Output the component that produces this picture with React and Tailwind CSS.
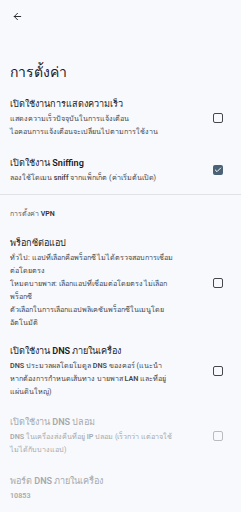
import { ArrowLeft, Check } from 'lucide-react';

const B = ({ children }) => <span className="font-semibold">{children}</span>;

const Box = ({ checked, disabled }) => {
  if (checked) {
    return (
      <div className="w-[10px] h-[10px] rounded-[2px] bg-[#4a6176] flex items-center justify-center">
        <Check size={8} strokeWidth={3} color="#ffffff" />
      </div>
    );
  }
  return (
    <div
      className={
        'w-[10px] h-[10px] rounded-[2px] border-[1.5px] ' +
        (disabled ? 'border-[#b9bbbf]' : 'border-[#45474c]')
      }
    />
  );
};

const Item = ({ title, lines, checked, hasBox = true, disabled, className = 'py-[9px]' }) => (
  <div className={'flex items-center pl-[10px] pr-[18px] ' + className}>
    <div className="flex-1">
      <div
        className={
          'text-[9.1px] leading-[14px] whitespace-nowrap ' +
          (disabled ? 'text-[#a7a9ad]' : 'text-[#1b1c1f]')
        }
      >
        {title}
      </div>
      <div
        className={
          'mt-[1px] text-[7.2px] leading-[13px] ' + (disabled ? 'text-[#a7a9ad]' : 'text-[#45474c]')
        }
      >
        {lines.map((l, i) => (
          <div key={i} className="whitespace-nowrap">
            {l}
          </div>
        ))}
      </div>
    </div>
    {hasBox && <Box checked={checked} disabled={disabled} />}
  </div>
);

export default function App() {
  return (
    <div
      className="w-[241px] h-[512px] overflow-hidden bg-[#f8f9fc]"
      style={{ fontFamily: 'Roboto, "Noto Sans", "DejaVu Sans", sans-serif' }}
    >
      <div className="h-[32px] flex items-center pl-[12px]">
        <ArrowLeft size={11} strokeWidth={2} color="#1b1c1f" />
      </div>
      <div className="pt-[30px] pl-[10px] h-[50px] text-[14px] leading-[20px] text-[#1b1c1f]">
        <div className="h-[20px]">การตั้งค่า</div>
      </div>
      <div className="mt-[6px]">
        <Item
          title="เปิดใช้งานการแสดงความเร็ว"
          lines={['แสดงความเร็วปัจจุบันในการแจ้งเตือน', 'ไอคอนการแจ้งเตือนจะเปลี่ยนไปตามการใช้งาน']}
        />
        <Item
          className="pt-[9px] pb-[10px]"
          title={
            <>
              เปิดใช้งาน <B>Sniffing</B>
            </>
          }
          lines={[
            <>
              ลองใช้โดเมน <B>sniff</B> จากแพ็กเก็ต (ค่าเริ่มต้นเปิด)
            </>,
          ]}
          checked
        />
      </div>
      <div className="h-px bg-[#e1e2e6]" />
      <div className="pt-[13px] pl-[10px] h-[32px] text-[7px] leading-[12px] text-[#5b5e63]">
        การตั้งค่า <span className="font-semibold text-[#2f3135]">VPN</span>
      </div>
      <Item
        title="พร็อกซีต่อแอป"
        lines={[
          'ทั่วไป: แอปที่เลือกคือพร็อกซี ไม่ได้ตรวจสอบการเชื่อม',
          'ต่อโดยตรง',
          'โหมดบายพาส: เลือกแอปที่เชื่อมต่อโดยตรง ไม่เลือก',
          'พร็อกซี',
          'ตัวเลือกในการเลือกแอปพลิเคชันพร็อกซีในเมนูโดย',
          'อัตโนมัติ',
        ]}
      />
      <Item
        className="pt-[6px] pb-[9px]"
        title={
          <>
            เปิดใช้งาน <B>DNS</B> ภายในเครื่อง
          </>
        }
        lines={[
          <>
            <B>DNS</B> ประมวลผลโดยโมดูล <B>DNS</B> ของคอร์ (แนะนำ
          </>,
          <>
            หากต้องการกำหนดเส้นทาง บายพาส <B>LAN</B> และที่อยู่
          </>,
          'แผ่นดินใหญ่)',
        ]}
      />
      <Item
        disabled
        className="pt-[8px] pb-[9px]"
        title={
          <>
            เปิดใช้งาน <B>DNS</B> ปลอม
          </>
        }
        lines={[
          <>
            <B>DNS</B> ในเครื่องส่งคืนที่อยู่ <B>IP</B> ปลอม (เร็วกว่า แต่อาจใช้
          </>,
          'ไม่ได้กับบางแอป)',
        ]}
      />
      <Item
        disabled
        hasBox={false}
        className="pt-[9px]"
        title={
          <>
            พอร์ต <B>DNS</B> ภายในเครื่อง
          </>
        }
        lines={[<B key="p">10853</B>]}
      />
    </div>
  );
}
